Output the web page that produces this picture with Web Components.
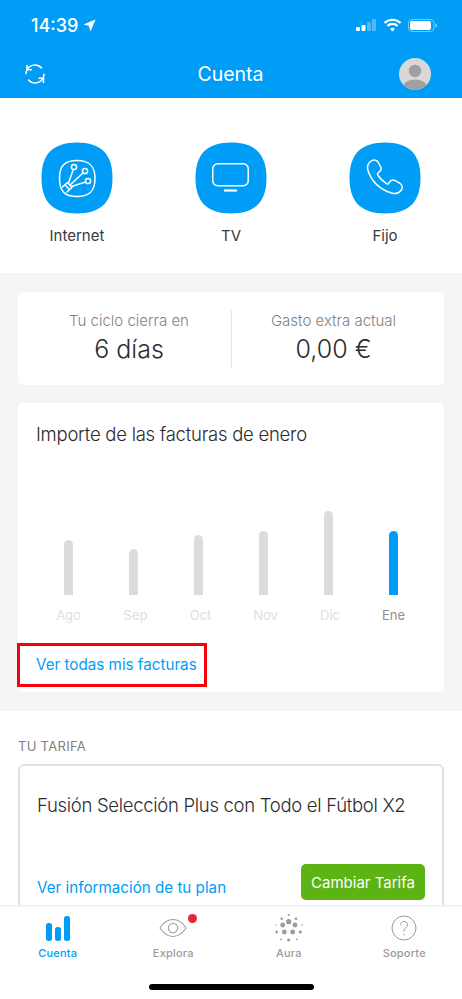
<!DOCTYPE html>
<html lang="es">
<head>
<meta charset="utf-8">
<title>Cuenta</title>
<style>
  html, body { margin: 0; padding: 0; background: #fff; }
  body { font-family: Inter, "Noto Sans", "Liberation Sans", sans-serif; width: 462px; height: 999px; overflow: hidden; }
</style>
</head>
<body>
<app-screen></app-screen>
<script>
const BLUE = '#009df6';

class StatusBar extends HTMLElement {
  constructor() { super(); this.attachShadow({ mode: 'open' }); }
  connectedCallback() {
    this.shadowRoot.innerHTML = `
      <style>
        :host { display: flex; align-items: center; justify-content: space-between; height: 50px; padding: 0 25px 0 31px; color: #fff; }
        .time { display: flex; align-items: center; gap: 5px; font-size: 18px; font-weight: 500; }
        .right { display: flex; align-items: center; }
        svg { display: block; }
        .wifi { margin: 0 6px 0 7px; }
      </style>
      <div class="time">14:39
        <svg width="13" height="13" viewBox="0 0 13 13"><path d="M12.6.4 7.4 12.6 6 7 .4 5.6z" fill="#fff"/></svg>
      </div>
      <div class="right">
        <svg width="20" height="12" viewBox="0 0 20 12">
          <rect x="0" y="8" width="4" height="4" rx="1" fill="#fff"/>
          <rect x="5.5" y="6" width="4" height="6" rx="1" fill="#fff"/>
          <rect x="11" y="3" width="4" height="9" rx="1" fill="#fff" opacity=".3"/>
          <rect x="16" y="0" width="4" height="12" rx="1" fill="#fff" opacity=".3"/>
        </svg>
        <svg class="wifi" width="19" height="14" viewBox="0 0 18 14" fill="none" stroke="#fff" stroke-width="2.2">
          <path d="M1 5a11.5 11.5 0 0 1 16 0"/><path d="M3.9 8a7.4 7.4 0 0 1 10.2 0"/><path d="M9 13.6 6.6 11a3.4 3.4 0 0 1 4.8 0z" fill="#fff" stroke="none"/>
        </svg>
        <svg width="29" height="13" viewBox="0 0 29 13">
          <rect x=".5" y=".5" width="25.5" height="12" rx="3.5" fill="none" stroke="#fff" stroke-opacity=".45"/>
          <rect x="2" y="2" width="21" height="9" rx="2" fill="#fff"/>
          <rect x="27.4" y="4.5" width="1.4" height="4" rx=".7" fill="#fff" opacity=".5"/>
        </svg>
      </div>`;
  }
}
customElements.define('status-bar', StatusBar);

class NavBar extends HTMLElement {
  constructor() { super(); this.attachShadow({ mode: 'open' }); }
  connectedCallback() {
    this.shadowRoot.innerHTML = `
      <style>
        :host { display: grid; grid-template-columns: 1fr auto 1fr; align-items: center; height: 48px; padding: 0 31px 0 24px; color: #fff; }
        .title { font-size: 19.5px; font-weight: 400; margin-left: 6px; }
        svg { display: block; }
        .avatar { width: 32px; height: 32px; border-radius: 50%; overflow: hidden; justify-self: end; }
      </style>
      <svg width="22" height="22" viewBox="0 0 22 22" fill="none" stroke="#fff" stroke-width="1.6" stroke-linecap="round" stroke-linejoin="round">
        <path d="M2 10.6A8.8 8.8 0 0 1 10.8 2a9 9 0 0 1 6.7 3"/>
        <path d="M20 11.4a8.8 8.8 0 0 1-8.8 8.6 9 9 0 0 1-6.7-3"/>
        <path d="M3 2.5v4.2h4.4"/><path d="M19.5 19.5v-4.2h-4.4"/>
      </svg>
      <div class="title">Cuenta</div>
      <div class="avatar">
        <svg width="32" height="32" viewBox="0 0 32 32">
          <rect width="32" height="32" fill="#d8d8d8"/>
          <circle cx="16" cy="13" r="6.2" fill="#a0a0a0"/>
          <ellipse cx="16" cy="29" rx="12" ry="7.5" fill="#a0a0a0"/>
        </svg>
      </div>`;
  }
}
customElements.define('nav-bar', NavBar);

const ICONS = {
  internet: `<path d="M20 2.500C32.500 2.500 38 8 38 20.500S32.500 38.500 20 38.500 2.500 33 2.500 20.500 7.500 2.500 20 2.500z"/>
    <path d="M5.500 29l5-4.500 4.500 5-5 4.500M8 26.700l4.500 5"/>
    <path d="M11.500 25l4.800-13.500M13 27l13-12M14.500 28.500l14.100-4.500"/>
    <circle cx="17" cy="9" r="2.600"/><circle cx="28" cy="13" r="2.600"/><circle cx="31" cy="23" r="2.600"/>`,
  tv: `<rect x="1.750" y="5.750" width="35.500" height="22" rx="5"/><path d="M13 32.500h13" stroke-width="2.200" stroke-linecap="butt"/>`,
  phone: `<path transform="translate(-1 0)" d="M6.500 3.500C9 1.500 12.500 1.500 14 4l2.500 4.500c1 2 .5 4-1 5.200L14 15c-.7.600-.7 1.300-.3 2 2.300 3.500 5.300 6.500 8.800 8.700.7.400 1.500.3 2-.3l1.500-1.900c1.300-1.500 3.500-1.800 5.300-.8l4.700 2.700c2.700 1.600 3 4.600 1 7.100-2 2.500-5.500 3.800-9.500 2.500C16 31.500 7.500 23 4 12.500 3 9 3.800 5.500 6.500 3.500z"/>`
};

class ServiceTile extends HTMLElement {
  constructor() { super(); this.attachShadow({ mode: 'open' }); }
  connectedCallback() {
    const icon = ICONS[this.getAttribute('icon')];
    this.shadowRoot.innerHTML = `
      <style>
        :host { display: flex; flex-direction: column; align-items: center; width: 72px; color: #3a3a3c; font-size: 15px; }
        .shape { position: relative; width: 72px; height: 72px; margin-bottom: 13px; }
        .shape svg { display: block; }
        .glyph { position: absolute; left: 16px; top: 16px; }
        .label { height: 18px; line-height: 18px; white-space: nowrap; }
      </style>
      <div class="shape">
        <svg width="72" height="72" viewBox="0 0 72 72"><path fill="${BLUE}" d="M36 .5C60 .5 71.500 12 71.500 36S60 71.500 36 71.500 .5 60 .5 36 12 .5 36 .5z"/></svg>
        <svg class="glyph" width="40" height="40" viewBox="0 0 40 40" fill="none" stroke="#fff" stroke-width="1.500" stroke-linecap="round" stroke-linejoin="round">${icon}</svg>
      </div>
      <div class="label"><slot></slot></div>`;
  }
}
customElements.define('service-tile', ServiceTile);

class SummaryCard extends HTMLElement {
  constructor() { super(); this.attachShadow({ mode: 'open' }); }
  connectedCallback() {
    this.shadowRoot.innerHTML = `
      <style>
        :host { display: grid; grid-template-columns: 1fr 1fr; height: 93px; box-sizing: border-box; padding: 0 9px; background: #fff; border-radius: 5px; align-items: center; }
        .col { display: flex; flex-direction: column; align-items: center; height: 58px; justify-content: center; }
        .col + .col { border-left: 1px solid #e9e9e9; }
        .k { font-size: 15px; font-weight: 300; color: #7f7f84; line-height: 18px; margin-top: -1px; }
        .v { font-size: 25px; color: #2c2c2e; font-weight: 300; line-height: 30px; margin-top: 4px; }
      </style>
      <div class="col"><div class="k">Tu ciclo cierra en</div><div class="v">6 días</div></div>
      <div class="col"><div class="k">Gasto extra actual</div><div class="v">0,00 €</div></div>`;
  }
}
customElements.define('summary-card', SummaryCard);

class BillsChart extends HTMLElement {
  constructor() { super(); this.attachShadow({ mode: 'open' }); }
  connectedCallback() {
    // month, bar height, label nudge (the month labels sit slightly right of their bars)
    const data = [['Ago', 55, 0], ['Sep', 46, 4], ['Oct', 60, 4], ['Nov', 64, 4], ['Dic', 84, 3], ['Ene', 64, 0]];
    const cols = data.map(([m, h, dx], i) => `
      <div class="col ${i === 5 ? 'on' : ''}">
        <div class="bar" style="height:${h}px"></div>
        <div class="m" style="margin-left:${dx}px">${m}</div>
      </div>`).join('');
    this.shadowRoot.innerHTML = `
      <style>
        :host { display: block; height: 289px; box-sizing: border-box; background: #fff; border-radius: 5px; padding: 20px 0 0; }
        h2 { margin: 0 0 0 18px; font-size: 18.5px; font-weight: 300; color: #2c2c2e; line-height: 22px; letter-spacing: -.25px; }
        .chart { display: grid; grid-template-columns: repeat(6, 65px); margin: 60px 0 0 18px; height: 120px; align-items: end; }
        .col { display: flex; flex-direction: column; align-items: center; }
        .bar { width: 9px; background: #dcdcdc; border-radius: 4.5px 4.5px 0 0; }
        .m { height: 20px; line-height: 20px; margin-top: 10px; font-size: 13px; color: #dedede; }
        .on .bar { background: ${BLUE}; }
        .on .m { color: #8e8e93; }
        a { display: inline-block; box-sizing: border-box; margin: 18px 0 0 -1px; width: 190px; height: 44px; line-height: 38px; padding-left: 16px; border: 3px solid #fb0007; font-size: 15.2px; font-weight: 400; color: ${BLUE}; text-decoration: none; white-space: nowrap; }
      </style>
      <h2>Importe de las facturas de enero</h2>
      <div class="chart">${cols}</div>
      <a>Ver todas mis facturas</a>`;
  }
}
customElements.define('bills-chart', BillsChart);

class PlanCard extends HTMLElement {
  constructor() { super(); this.attachShadow({ mode: 'open' }); }
  connectedCallback() {
    this.shadowRoot.innerHTML = `
      <style>
        :host { display: block; }
        .head { height: 20px; line-height: 20px; font-size: 13px; font-weight: 400; color: #7f7f84; letter-spacing: .3px; }
        .card { box-sizing: border-box; margin-top: 8px; height: 150px; border: 2px solid #e2e2e2; border-bottom: 0; border-radius: 6px 6px 0 0; padding: 27px 17px 0; display: flex; flex-direction: column; }
        .name { font-size: 18.5px; font-weight: 300; line-height: 24px; color: #2c2c2e; letter-spacing: -.3px; white-space: nowrap; }
        .row { display: flex; align-items: flex-end; justify-content: space-between; margin-top: 47px; }
        a { font-size: 15.2px; font-weight: 400; line-height: 24px; color: ${BLUE}; white-space: nowrap; }
        button { width: 124px; height: 36px; padding: 0; border: 0; border-radius: 5px; background: #5cb314; color: #fff; font: 400 15px Inter, "Noto Sans", sans-serif; }
      </style>
      <div class="head">TU TARIFA</div>
      <div class="card">
        <div class="name">Fusión Selección Plus con Todo el Fútbol X2</div>
        <div class="row"><a>Ver información de tu plan</a><button>Cambiar Tarifa</button></div>
      </div>`;
  }
}
customElements.define('plan-card', PlanCard);

class TabItem extends HTMLElement {
  constructor() { super(); this.attachShadow({ mode: 'open' }); }
  connectedCallback() {
    this.shadowRoot.innerHTML = `
      <style>
        :host { display: flex; flex-direction: column; align-items: center; color: #9b9b9b; font-size: 11px; font-weight: 500; letter-spacing: .2px; }
        :host([active]) { color: ${BLUE}; }
        .ico { height: 30px; width: 40px; display: flex; align-items: center; justify-content: center; position: relative; }
        .label { margin-top: 3px; line-height: 14px; height: 14px; }
      </style>
      <div class="ico"><slot name="icon"></slot></div>
      <div class="label"><slot></slot></div>`;
  }
}
customElements.define('tab-item', TabItem);

class TabBar extends HTMLElement {
  constructor() { super(); this.attachShadow({ mode: 'open' }); }
  connectedCallback() {
    // dots of the Aura mark: x, y, r
    const dots = [[13.7,1,1],[6.7,4.7,1.3],[21,4.7,1.3],[13.7,7.7,2.6],[1,11,.7],[7.7,11,2.4],[20,11,2.4],[27,11,.8],[1.7,18,1.4],[9.3,18,2.4],[17.7,18,2.4],[25.3,18,1.6],[6,25.3,.9],[13.7,26,1.6],[21.7,25.3,.9]];
    this.shadowRoot.innerHTML = `
      <style>
        :host { display: block; flex: none; height: 94px; box-sizing: border-box; background: #fff; border-top: 2px solid #f2f2f2; position: relative; }
        .tabs { display: grid; grid-template-columns: repeat(4, 115.5px); padding-top: 6px; }
        svg { display: block; }
        .dot { position: absolute; left: 188px; top: 7px; width: 9px; height: 9px; border-radius: 50%; background: #dc2c3c; }
        .home { position: absolute; left: 149px; bottom: 9px; width: 165px; height: 6px; border-radius: 3px; background: #000; }
      </style>
      <div class="tabs">
        <tab-item active>
          <svg slot="icon" width="24" height="25" viewBox="0 0 24 25" fill="${BLUE}">
            <rect x="0" y="7" width="6" height="18" rx="2.5"/><rect x="9" y="11" width="6" height="14" rx="2.5"/><rect x="18" y="0" width="6" height="25" rx="2.5"/>
          </svg>Cuenta
        </tab-item>
        <tab-item>
          <svg slot="icon" width="28" height="20" viewBox="0 0 30 20" fill="none" stroke="#9b9b9b" stroke-width="1.1">
            <path d="M1 10C5 4 9.5 1 15 1s10 3 14 9c-4 6-8.500 9-14 9S5 16 1 10z"/><circle cx="15" cy="10" r="5"/>
          </svg>Explora
        </tab-item>
        <tab-item>
          <svg slot="icon" width="28" height="28" viewBox="0 0 28 28" fill="#9b9b9b">
            ${dots.map(([x, y, r]) => `<circle cx="${x}" cy="${y}" r="${r}"/>`).join('')}
          </svg>Aura
        </tab-item>
        <tab-item>
          <svg slot="icon" width="26" height="26" viewBox="0 0 26 26" fill="none" stroke="#9b9b9b" stroke-width="1">
            <circle cx="13" cy="13" r="12"/>
            <path d="M9.5 9.8a3.500 3.500 0 1 1 5.400 3c-1.300.9-1.900 1.500-1.900 3v.5" stroke-linecap="round"/>
            <circle cx="13" cy="19.5" r=".7" fill="#9b9b9b" stroke="none"/>
          </svg>Soporte
        </tab-item>
      </div>
      <div class="dot"></div>
      <div class="home"></div>`;
  }
}
customElements.define('tab-bar', TabBar);

class AppScreen extends HTMLElement {
  constructor() { super(); this.attachShadow({ mode: 'open' }); }
  connectedCallback() {
    this.shadowRoot.innerHTML = `
      <style>
        :host { display: flex; flex-direction: column; width: 462px; height: 999px; overflow: hidden; background: #fff; }
        header { background: ${BLUE}; height: 98px; flex: none; }
        main { flex: 1; min-height: 0; overflow: hidden; }
        .services { height: 175px; box-sizing: border-box; padding-top: 44px; display: grid; grid-template-columns: repeat(3, 154px); justify-content: center; justify-items: center; }
        .grey { background: #f5f5f5; height: 438px; box-sizing: border-box; padding: 19px 18px; display: flex; flex-direction: column; gap: 18px; }
        .plan { padding: 25px 18px 0; }
      </style>
      <header><status-bar></status-bar><nav-bar></nav-bar></header>
      <main>
        <section class="services">
          <service-tile icon="internet">Internet</service-tile>
          <service-tile icon="tv">TV</service-tile>
          <service-tile icon="phone">Fijo</service-tile>
        </section>
        <section class="grey">
          <summary-card></summary-card>
          <bills-chart></bills-chart>
        </section>
        <section class="plan"><plan-card></plan-card></section>
      </main>
      <tab-bar></tab-bar>`;
  }
}
customElements.define('app-screen', AppScreen);
</script>
</body>
</html>
